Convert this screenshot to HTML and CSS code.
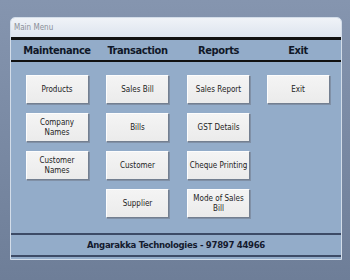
FILE: index.html
```html
<!DOCTYPE html>
<html lang="en">
<head>
    <meta charset="UTF-8">
    <title>Main Menu</title>
    <link rel="stylesheet" href="styles.css">
</head>
<body>
    <div class="window">
        <div class="title-bar">Main Menu</div>
        <div class="menu-bar">
            <div class="menu-head">Maintenance</div>
            <div class="menu-head">Transaction</div>
            <div class="menu-head">Reports</div>
            <div class="menu-head">Exit</div>
        </div>
        <div class="menu-body">
            <div class="menu-col">
                <button class="btn">Products</button>
                <button class="btn">Company<br>Names</button>
                <button class="btn">Customer<br>Names</button>
            </div>
            <div class="menu-col">
                <button class="btn">Sales Bill</button>
                <button class="btn">Bills</button>
                <button class="btn">Customer</button>
                <button class="btn">Supplier</button>
            </div>
            <div class="menu-col">
                <button class="btn">Sales Report</button>
                <button class="btn">GST Details</button>
                <button class="btn">Cheque Printing</button>
                <button class="btn">Mode of Sales<br>Bill</button>
            </div>
            <div class="menu-col">
                <button class="btn">Exit</button>
            </div>
        </div>
        <div class="footer">Angarakka Technologies - 97897 44966</div>
    </div>
</body>
</html>
```

FILE: styles.css
```css
* { box-sizing: border-box; margin: 0; padding: 0; }
body {
    width: 350px;
    height: 280px;
    overflow: hidden;
    background: linear-gradient(to bottom, #8595af, #6e7e98);
    font-family: "DejaVu Sans Condensed", "DejaVu Sans", sans-serif;
    padding: 17px 0 0 10px;
}
.window {
    width: 332px;
    height: 243px;
    border: 1px solid #d3dde9;
    border-radius: 5px 5px 0 0;
    background-color: #93acc9;
    display: flex;
    flex-direction: column;
}
.title-bar {
    height: 22px;
    border-radius: 4px 4px 0 0;
    background: linear-gradient(to bottom, #f0f3f8, #dde4ee);
    border-bottom: 3px solid #111;
    padding: 5px 0 0 3px;
    font-size: 8px;
    color: #8a8f98;
}
.menu-bar,
.menu-body {
    display: grid;
    grid-template-columns: 80px 81px 81px 78px;
    padding-left: 6px;
}
.menu-bar {
    height: 22px;
    border-bottom: 2px solid #111;
    align-items: center;
}
.menu-head {
    text-align: center;
    font-size: 11px;
    font-weight: bold;
    letter-spacing: -0.4px;
    color: #101828;
}
.menu-body {
    padding-top: 13px;
    height: 171px;
}
.menu-col {
    display: flex;
    flex-direction: column;
    align-items: center;
    gap: 9px;
}
.btn {
    width: 63px;
    height: 29px;
    font-family: inherit;
    font-size: 8px;
    line-height: 10px;
    color: #222;
    background: linear-gradient(to bottom, #f4f4f4, #ebebeb);
    border: 1px solid;
    border-color: #fdfdfd #737f90 #737f90 #fdfdfd;
    box-shadow: 1px 1px 0 #8090a6;
}
.footer {
    height: 24px;
    border-top: 2px solid #3d4b66;
    border-bottom: 2px solid #3d4b66;
    text-align: center;
    line-height: 20px;
    font-size: 9.5px;
    font-weight: bold;
    letter-spacing: -0.3px;
    color: #141a2e;
}
```
